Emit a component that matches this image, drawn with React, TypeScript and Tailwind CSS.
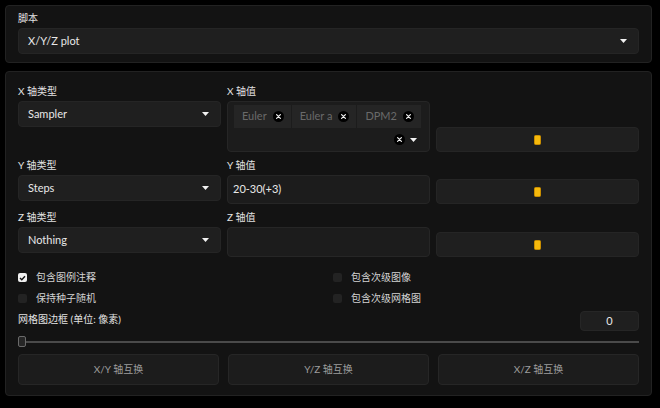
import React from "react";

const font = { fontFamily: 'Lato, "Noto Sans CJK SC", sans-serif' };

const Arrow = () => (
  <svg width="7" height="4" viewBox="0 0 7 4" className="shrink-0">
    <polygon points="0,0 7,0 3.5,4" fill="#f2f2f2" />
  </svg>
);

const XCircle = () => (
  <svg width="11" height="11" viewBox="0 0 11 11" className="shrink-0">
    <circle cx="5.5" cy="5.5" r="5.5" fill="#000" />
    <path d="M3.6 3.6 L7.4 7.4 M7.4 3.6 L3.6 7.4" stroke="#eee" strokeWidth="1.2" strokeLinecap="round" />
  </svg>
);

const Label = ({ children }: { children: React.ReactNode }) => (
  <div className="text-[10px] leading-[14px] text-[#e2e2e2] mb-[3px]">{children}</div>
);

const Select = ({ value }: { value: string }) => (
  <div className="h-[26px] rounded-[4px] bg-[#1f1f1f] border border-[#252525] flex items-center justify-between pl-[9px] pr-[11px] text-[11px] text-[#e8e8e8]">
    <span>{value}</span>
    <Arrow />
  </div>
);

const SliderBox = () => (
  <div className="h-[25px] self-end rounded-[4px] bg-[#1f1f1f] border border-[#252525] flex items-center justify-center">
    <div className="w-[7px] h-[10px] rounded-[1.5px] bg-[#f6b90c] border border-[#c98e00]" />
  </div>
);

const Chip = ({ text }: { text: string }) => (
  <div className="h-[23px] bg-[#252525] flex items-center gap-[6px] pl-[8px] pr-[7px] text-[11px] text-[#6a6a6a] whitespace-nowrap">
    <span>{text}</span>
    <XCircle />
  </div>
);

const Check = ({ checked, label }: { checked?: boolean; label: string }) => (
  <div className="flex items-center gap-[9px] h-[21px]">
    {checked ? (
      <div className="w-[9px] h-[9px] rounded-[2px] bg-[#f0f0f0] flex items-center justify-center">
        <svg width="7" height="6" viewBox="0 0 7 6">
          <path d="M1 3 L2.8 4.8 L6 1.2" stroke="#111" strokeWidth="1.4" fill="none" />
        </svg>
      </div>
    ) : (
      <div className="w-[9px] h-[9px] rounded-[2px] bg-[#232323]" />
    )}
    <span className="text-[10px] text-[#d2d2d2]">{label}</span>
  </div>
);

const SwapButton = ({ text }: { text: string }) => (
  <div className="h-[31px] rounded-[4px] bg-[#1c1c1c] border border-[#262626] flex items-center justify-center text-[10px] text-[#9c9c9c]">
    {text}
  </div>
);

export default function App() {
  return (
    <div className="min-h-[408px] bg-black pt-[5px]" style={font}>
      <div className="w-[647px] ml-[5px] rounded-[4px] bg-[#131313] border border-[#222] px-[12px] pt-[5px] pb-[8px]">
        <Label>脚本</Label>
        <Select value="X/Y/Z plot" />
      </div>

      <div className="w-[647px] ml-[5px] mt-[8px] rounded-[4px] bg-[#131313] border border-[#222] px-[12px] pt-[12px] pb-[10px]">
        {/* X */}
        <div className="grid grid-cols-3 gap-x-[6px]">
          <div className="self-start">
            <Label>X 轴类型</Label>
            <Select value="Sampler" />
          </div>
          <div>
            <Label>X 轴值</Label>
            <div className="h-[51px] rounded-[4px] bg-[#1c1c1c] border border-[#262626] flex flex-col pl-[6px] pt-[3px]">
              <div className="flex gap-[1px]">
                <Chip text="Euler" />
                <Chip text="Euler a" />
                <Chip text="DPM2" />
              </div>
              <div className="flex-1 flex items-center justify-end gap-[5px] pr-[12px]">
                <XCircle />
                <Arrow />
              </div>
            </div>
          </div>
          <SliderBox />
        </div>

        {/* Y */}
        <div className="grid grid-cols-3 gap-x-[6px] mt-[6px]">
          <div className="self-start">
            <Label>Y 轴类型</Label>
            <Select value="Steps" />
          </div>
          <div>
            <Label>Y 轴值</Label>
            <div className="h-[29px] rounded-[4px] bg-[#1c1c1c] border border-[#262626] flex items-center px-[5px] text-[11px] text-[#e8e8e8]">
              20-30(+3)
            </div>
          </div>
          <SliderBox />
        </div>

        {/* Z */}
        <div className="grid grid-cols-3 gap-x-[6px] mt-[6px]">
          <div className="self-start">
            <Label>Z 轴类型</Label>
            <Select value="Nothing" />
          </div>
          <div>
            <Label>Z 轴值</Label>
            <div className="h-[30px] rounded-[4px] bg-[#1c1c1c] border border-[#262626]" />
          </div>
          <SliderBox />
        </div>

        <div className="grid grid-cols-2 gap-x-[9px] mt-[10px]">
          <Check checked label="包含图例注释" />
          <Check label="包含次级图像" />
          <Check label="保持种子随机" />
          <Check label="包含次级网格图" />
        </div>

        <div className="flex items-center justify-between mt-[2px]">
          <span className="text-[10px] text-[#e2e2e2] -mt-[4px]">网格图边框 (单位: 像素)</span>
          <div className="w-[59px] h-[20px] rounded-[4px] bg-[#1f1f1f] border border-[#262626] flex items-center justify-center text-[11px] text-[#e8e8e8]">
            0
          </div>
        </div>

        <div className="relative h-[11px] mt-[5px] flex items-center">
          <div className="w-full h-[2px] bg-[#4a4a4a]" />
          <div className="absolute left-0 top-0 w-[8px] h-[11px] rounded-[2px] bg-[#262626] border border-[#6a6a6a]" />
        </div>

        <div className="grid grid-cols-3 gap-x-[9px] mt-[7px]">
          <SwapButton text="X/Y 轴互换" />
          <SwapButton text="Y/Z 轴互换" />
          <SwapButton text="X/Z 轴互换" />
        </div>
      </div>
    </div>
  );
}
